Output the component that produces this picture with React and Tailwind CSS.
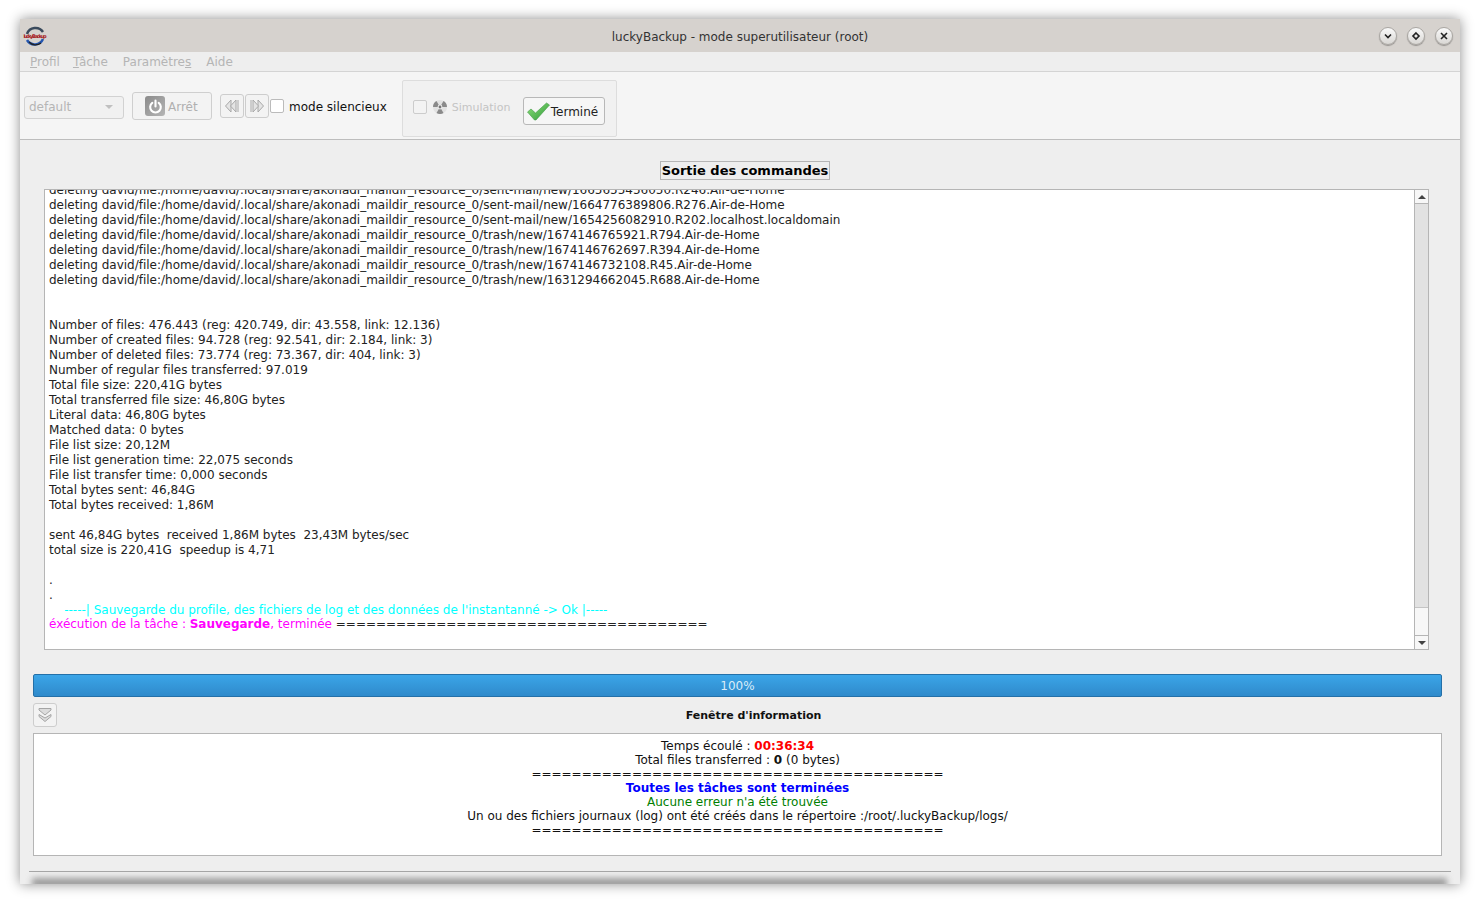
const logLines = [
  "deleting david/file:/home/david/.local/share/akonadi_maildir_resource_0/sent-mail/new/1665655456050.R246.Air-de-Home",
  "deleting david/file:/home/david/.local/share/akonadi_maildir_resource_0/sent-mail/new/1664776389806.R276.Air-de-Home",
  "deleting david/file:/home/david/.local/share/akonadi_maildir_resource_0/sent-mail/new/1654256082910.R202.localhost.localdomain",
  "deleting david/file:/home/david/.local/share/akonadi_maildir_resource_0/trash/new/1674146765921.R794.Air-de-Home",
  "deleting david/file:/home/david/.local/share/akonadi_maildir_resource_0/trash/new/1674146762697.R394.Air-de-Home",
  "deleting david/file:/home/david/.local/share/akonadi_maildir_resource_0/trash/new/1674146732108.R45.Air-de-Home",
  "deleting david/file:/home/david/.local/share/akonadi_maildir_resource_0/trash/new/1631294662045.R688.Air-de-Home",
  "",
  "",
  "Number of files: 476.443 (reg: 420.749, dir: 43.558, link: 12.136)",
  "Number of created files: 94.728 (reg: 92.541, dir: 2.184, link: 3)",
  "Number of deleted files: 73.774 (reg: 73.367, dir: 404, link: 3)",
  "Number of regular files transferred: 97.019",
  "Total file size: 220,41G bytes",
  "Total transferred file size: 46,80G bytes",
  "Literal data: 46,80G bytes",
  "Matched data: 0 bytes",
  "File list size: 20,12M",
  "File list generation time: 22,075 seconds",
  "File list transfer time: 0,000 seconds",
  "Total bytes sent: 46,84G",
  "Total bytes received: 1,86M",
  "",
  "sent 46,84G bytes  received 1,86M bytes  23,43M bytes/sec",
  "total size is 220,41G  speedup is 4,71",
  "",
  ".",
  ".",
];

const rule = "=========================================";

function Logo() {
  return (
    <svg width="26" height="26" viewBox="0 0 26 26" className="shrink-0">
      <path d="M5 11 A9 9 0 0 1 21 9" fill="none" stroke="#3a4a5c" strokeWidth="2.5" />
      <path d="M21 16 A9 9 0 0 1 5 17" fill="none" stroke="#2456b0" strokeWidth="2.5" />
      <path d="M7 19 A9 9 0 0 0 19 20" fill="none" stroke="#222" strokeWidth="1.2" />
      <text x="13" y="14.5" textAnchor="middle" fontSize="5" fontWeight="700" fill="#a5161a" fontFamily="'DejaVu Sans', sans-serif" textLength="23">luckyBackup</text>
    </svg>
  );
}

function WinButton({ children }) {
  return (
    <div className="w-[18px] h-[18px] rounded-full flex items-center justify-center border border-[#a9a6a2] bg-gradient-to-b from-[#fafafa] to-[#d9d7d4] shadow-[0_1px_1px_rgba(0,0,0,0.3)]">
      <svg width="10" height="10" viewBox="0 0 10 10">{children}</svg>
    </div>
  );
}

function PowerIcon() {
  return (
    <div className="w-5 h-5 rounded-[3px] bg-gradient-to-br from-[#8a8a8a] via-[#a0a0a0] to-[#b5b5b5] flex items-center justify-center">
      <svg width="17" height="17" viewBox="0 0 16 16" fill="none" stroke="#fff" strokeWidth="2" strokeLinecap="round">
        <path d="M5 4.6 A5 5 0 1 0 11 4.6" />
        <path d="M8 2.5 V8" />
      </svg>
    </div>
  );
}

function NavButton({ back }) {
  return (
    <div className="w-6 h-6 rounded-[3px] border border-[#cdcdcd] bg-[#f3f3f3] flex items-center justify-center">
      <svg width="16" height="14" viewBox="0 0 16 14" fill="#e4e4e4" stroke="#a8a8a8" strokeWidth="1" className={back ? "" : "rotate-180"}>
        <path d="M7 1 L1.5 7 L7 13 Z" />
        <path d="M12 1 L6.5 7 L12 13 Z" />
        <path d="M14 1 V13" />
      </svg>
    </div>
  );
}

function RadiationIcon() {
  return (
    <svg width="14" height="14" viewBox="0 0 14 14">
      <circle cx="7" cy="7" r="7" fill="#e2e2e2" />
      <path d="M7 7 L3.5 1 A7 7 0 0 0 0 7 Z M7 7 L10.5 1 A7 7 0 0 1 14 7 Z M7 7 L3.5 13 A7 7 0 0 0 10.5 13 Z" fill="#8a8a8a" />
      <circle cx="7" cy="7" r="2.4" fill="#ececec" />
      <circle cx="7" cy="7" r="1.4" fill="#777" />
    </svg>
  );
}

function CheckIcon() {
  return (
    <svg width="23" height="19" viewBox="0 0 23 19" className="shrink-0">
      <defs>
        <linearGradient id="checkFill" x1="0" y1="0" x2="1" y2="1">
          <stop offset="0" stopColor="#8fe07a" />
          <stop offset="1" stopColor="#2f9a3a" />
        </linearGradient>
      </defs>
      <path d="M0.5 10 L4 7 L8.5 11 L19.5 1 L22.5 3 L9 18 L7.5 18 Z" fill="url(#checkFill)" stroke="#3f9a45" strokeWidth="0.6" />
    </svg>
  );
}

export default function App() {
  return (
    <div className="w-[1480px] h-[904px] bg-white overflow-hidden pt-[19px] pl-5 text-[12px] font-['DejaVu_Sans',sans-serif] text-black">
      <div className="w-[1440px] h-[865px] flex flex-col bg-[#eeeeee] shadow-[0_0_12px_rgba(0,0,0,0.45)]">
        {/* title bar */}
        <div className="h-[33px] bg-[#d6d2ce] flex items-center pl-[2px] pr-[7px]">
          <Logo />
          <div className="flex-1 text-center text-[#333] text-[12px] pl-[53px] pt-[2px]">luckyBackup - mode superutilisateur (root)</div>
          <div className="flex items-center gap-[10px]">
            <WinButton>
              <path d="M2 3.5 L5 6.5 L8 3.5" fill="none" stroke="#222" strokeWidth="1.6" />
            </WinButton>
            <WinButton>
              <path d="M5 2 L8 5 L5 8 L2 5 Z" fill="none" stroke="#222" strokeWidth="1.6" />
            </WinButton>
            <WinButton>
              <path d="M2 2 L8 8 M8 2 L2 8" fill="none" stroke="#222" strokeWidth="1.6" />
            </WinButton>
          </div>
        </div>

        {/* menu */}
        <div className="h-5 bg-[#eeeeee] border-b border-[#d4d4d4] flex items-center pl-[10px] text-[#b5b5b5]">
          <span><span className="underline">P</span>rofil</span>
          <span className="ml-[13px]"><span className="underline">T</span>âche</span>
          <span className="ml-[15px]">Paramètre<span className="underline">s</span></span>
          <span className="ml-[15px]">Aide</span>
        </div>

        {/* toolbar */}
        <div className="h-[68px] bg-[#f5f5f5] border-b border-[#bdbdbd] flex items-center pl-1">
          <div className="w-[100px] h-[23px] mt-[3px] rounded-[3px] border border-[#d2d2d2] bg-[#f1f1f1] flex items-center justify-between pl-1 pr-[10px] text-[#b5b5b5]">
            default
            <span className="w-0 h-0 border-x-[4px] border-x-transparent border-t-[4px] border-t-[#c0c0c0]" />
          </div>
          <div className="w-20 h-7 ml-2 mt-px rounded-[3px] border border-[#cfcfcf] bg-[#f3f3f3] flex items-center pl-3 gap-[3px] text-[#b0b0b0]">
            <PowerIcon />
            <span className="pt-px">Arrêt</span>
          </div>
          <div className="ml-2 flex gap-px">
            <NavButton back />
            <NavButton />
          </div>
          <div className="w-[14px] h-[14px] ml-px rounded-[2px] border border-[#bbbbbb] bg-white" />
          <span className="ml-[5px] mt-[2px] text-[#111]">mode silencieux</span>

          <div className="w-[215px] h-[57px] ml-[15px] mt-[6px] rounded-[2px] border border-[#dddddd] bg-[#f1f1f1] flex items-center pl-[10px]">
            <div className="w-[14px] h-[14px] rounded-[2px] border border-[#cccccc] bg-[#f3f3f3] mt-[-3px]" />
            <div className="ml-[6px] mt-[-3px]"><RadiationIcon /></div>
            <span className="ml-[5px] w-[59px] mt-[-1px] text-[11px] text-[#c4c4c4]">Simulation</span>
            <div className="w-[82px] h-7 ml-3 mt-[5px] rounded-[3px] border border-[#b8b8b8] bg-[#f6f6f6] flex items-center pl-[3px] gap-px text-[#222]">
              <CheckIcon />
              <span className="pt-[2px]">Terminé</span>
            </div>
          </div>
        </div>

        {/* output header */}
        <div className="h-[49px] flex items-center justify-center pl-[10px] pt-[12px]">
          <div className="h-[19px] border border-[#b5b5b5] flex items-center font-bold text-[13px] leading-none px-px">Sortie des commandes</div>
        </div>

        {/* log */}
        <div className="ml-6 w-[1385px] h-[461px] flex border border-[#b5b5b5] bg-white">
          <div className="flex-1 overflow-hidden pl-1 leading-[15px] whitespace-pre tracking-[-0.008px] text-[#222]">
            <div className="mt-[-7px]">
              {logLines.map((line, i) => (
                <div key={i} className="h-[15px]">{line}</div>
              ))}
              <div className="h-[15px] text-[#00ffff]">{"    -----| Sauvegarde du profile, des fichiers de log et des données de l'instantanné -> Ok |-----"}</div>
              <div className="h-[15px] mt-[-1px] text-[#ff00ff]">
                éxécution de la tâche : <b>Sauvegarde</b>, terminée <span className="text-[#222]">=====================================</span>
              </div>
            </div>
          </div>
          <div className="w-[14px] flex flex-col border-l border-[#b5b5b5] bg-[#f7f7f7]">
            <div className="h-[14px] flex items-center justify-center border-b border-[#b5b5b5]">
              <span className="w-0 h-0 border-x-[4px] border-x-transparent border-b-[4px] border-b-[#444]" />
            </div>
            <div className="h-[404px] bg-[#e2e2e2] border-b border-[#c4c4c4]" />
            <div className="flex-1" />
            <div className="h-[14px] flex items-center justify-center border-t border-[#b5b5b5]">
              <span className="w-0 h-0 border-x-[4px] border-x-transparent border-t-[4px] border-t-[#444]" />
            </div>
          </div>
        </div>

        {/* progress */}
        <div className="ml-[13px] mt-6 w-[1409px] h-[23px] rounded-[2px] border border-[#2470a8] bg-gradient-to-b from-[#3ba5e8] to-[#2f8acb] flex items-center justify-center text-[#d9ecf8]">
          100%
        </div>

        {/* info header */}
        <div className="ml-[13px] mt-[6px] w-[1409px] flex items-center">
          <div className="w-6 h-6 rounded-[3px] border border-[#cdcdcd] bg-[#f3f3f3] flex items-center justify-center">
            <svg width="16" height="16" viewBox="0 0 16 16" fill="#dcdcdc" stroke="#a5a5a5" strokeWidth="1">
              <path d="M2 1.5 H14 V3 L8 8 L2 3 Z" />
              <path d="M2 7.5 L8 11 L14 7.5 V9.5 L8 14.5 L2 9.5 Z" />
            </svg>
          </div>
          <div className="flex-1 text-center font-bold text-[11px] pl-[8px] pt-[2px] text-[#111]">Fenêtre d'information</div>
        </div>

        {/* info box */}
        <div className="ml-[13px] mt-[6px] w-[1409px] h-[123px] border border-[#b5b5b5] bg-white pt-[5px] text-center leading-[14px] text-[#111]">
          <div>Temps écoulé : <b className="text-[#ff0000]">00:36:34</b></div>
          <div>Total files transferred : <b>0</b> (0 bytes)</div>
          <div>{rule}</div>
          <div className="font-bold text-[#0000ff]">Toutes les tâches sont terminées</div>
          <div className="text-[#008000]">Aucune erreur n'a été trouvée</div>
          <div>Un ou des fichiers journaux (log) ont été créés dans le répertoire :/root/.luckyBackup/logs/</div>
          <div>{rule}</div>
        </div>

        {/* bottom line */}
        <div className="ml-[9px] mt-[15px] w-[1422px] border-t border-[#a5a5a5]" />
        <div className="flex-1 min-h-0 overflow-hidden flex items-end pl-3 pr-[13px]">
          <div className="w-full h-[10px] mb-[-4px] shrink-0 bg-[#9c9c9c] blur-[3px]" />
        </div>
      </div>
    </div>
  );
}
